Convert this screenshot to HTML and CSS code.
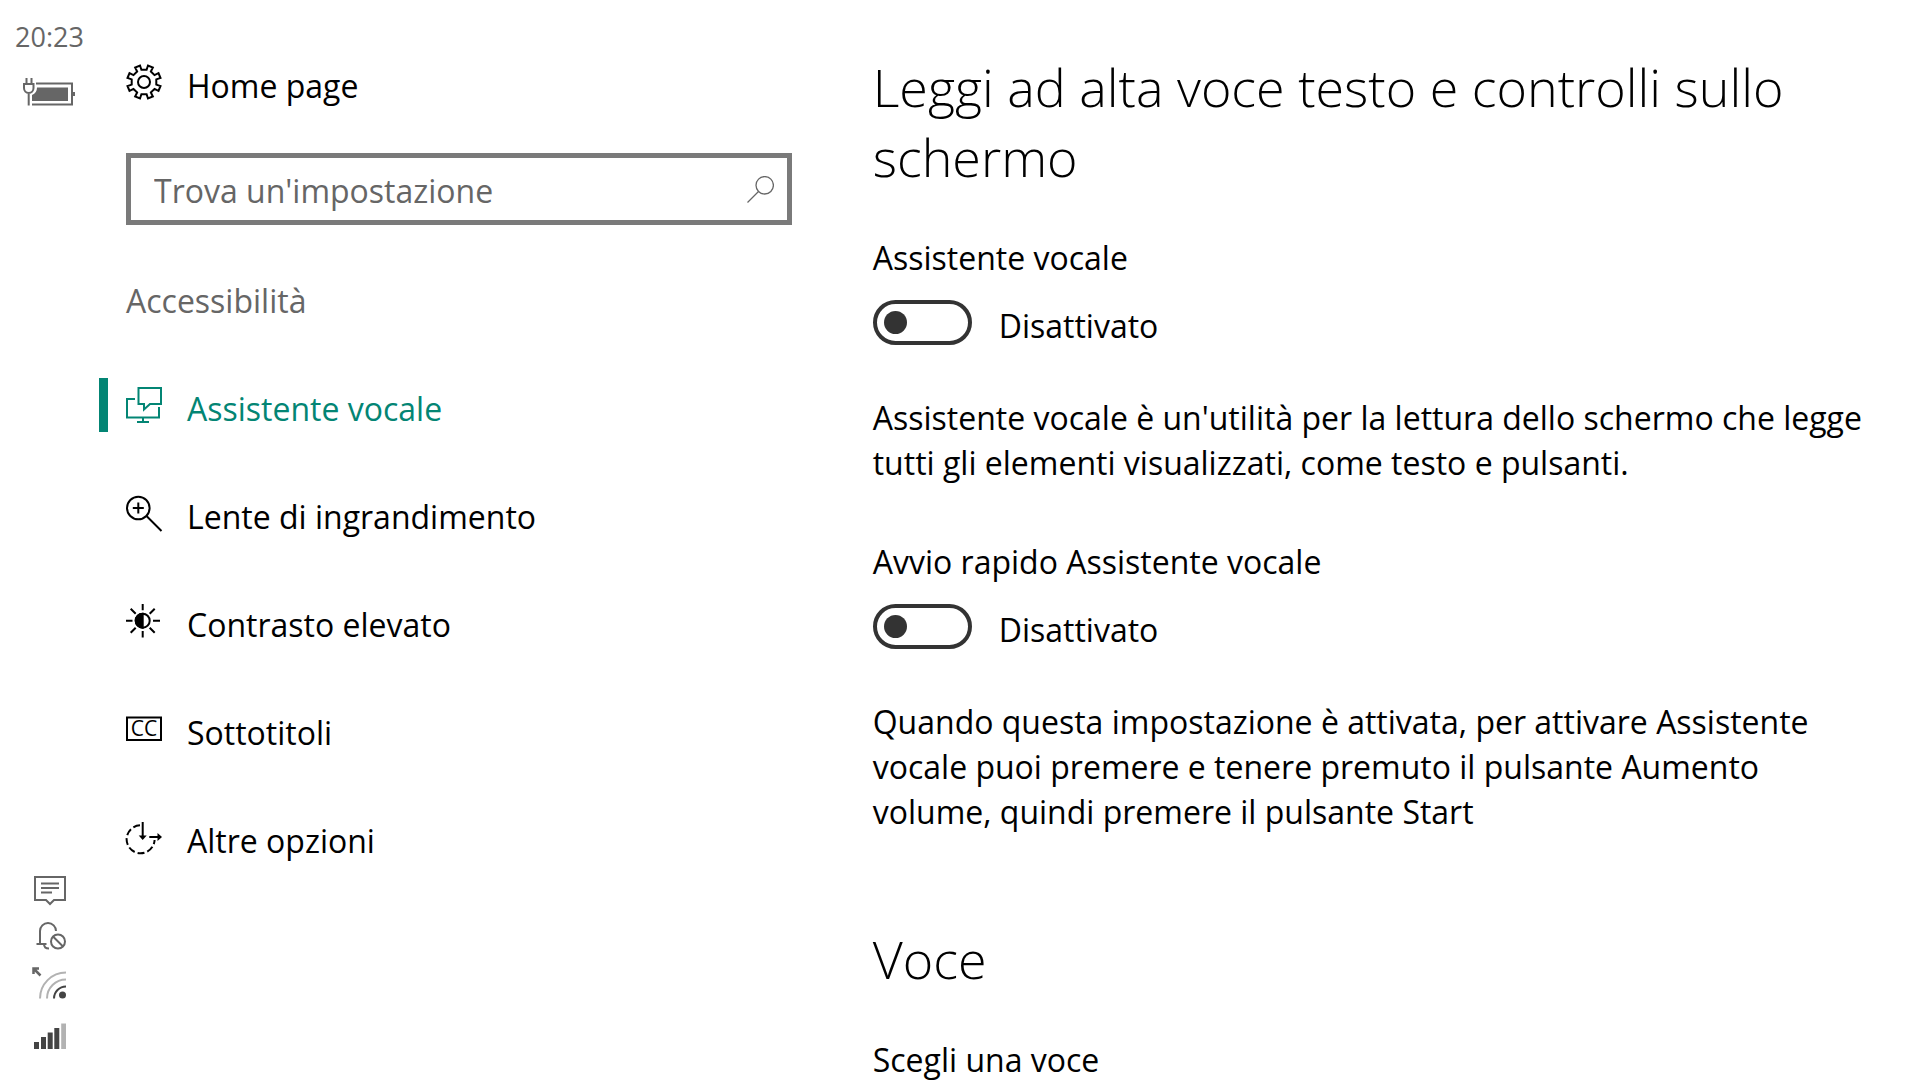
FILE: index.html
```html
<!DOCTYPE html>
<html lang="it">
<head>
    <meta charset="UTF-8">
    <meta name="viewport" content="width=device-width, initial-scale=1.0">
    <title>Assistente vocale</title>
    <link rel="stylesheet" href="styles.css">
</head>
<body>
    <div class="app">
        <aside class="statusbar">
            <div class="status-top">
                <time class="clock">20:23</time>
                <svg class="battery" width="53" height="28" viewBox="0 0 53 28">
                    <path d="M3.500 0v6M8.500 0v6M0 6h11.500M1 6v4a4.700 5 0 0 0 9.500 0V6M5.700 15v12.500" fill="none" stroke="currentColor" stroke-width="2"/>
                    <path d="M13 5.500h36v21H9" fill="none" stroke="currentColor" stroke-width="2"/>
                    <path d="M14 9.500h31V23H9v-6q5-2 5-7.500zM50 14h2v4h-2z" fill="currentColor"/>
                </svg>
            </div>
            <div class="status-bottom">
                <svg width="35" height="34" viewBox="0 0 35 34" fill="none" stroke="currentColor" stroke-width="2">
                    <path d="M3 5H33V28H22l-4 4-4-4H3z"/>
                    <path d="M9 11.500h18M9 16h18M9 20.500h11"/>
                </svg>
                <svg width="35" height="34" viewBox="0 0 35 34" fill="none" stroke="currentColor" stroke-width="2">
                    <path d="M8 25V12a8 8 0 0 1 16 0M4.500 25h10M12 25c0 3 2 4.500 5 4.500"/>
                    <circle cx="26" cy="22.500" r="7"/>
                    <path d="M21 17.500l10 10"/>
                </svg>
                <svg width="35" height="34" viewBox="0 0 35 34" fill="none" stroke-width="2">
                    <path d="M1.500 8V2.500H7M1.500 2.500l7 7" stroke="#666" stroke-width="2.500"/>
                    <path d="M8 32.500A26 26 0 0 1 34 6.500M15 32.500a19 19 0 0 1 19-19" stroke="#b2b2b2"/>
                    <path d="M22 32.500a12 12 0 0 1 12-12" stroke="#444"/>
                    <circle cx="30.500" cy="29" r="3.500" fill="#444"/>
                </svg>
                <svg width="35" height="40" viewBox="0 0 35 40" fill="#444">
                    <path d="M2 29h5v7H2zM9 24h5v12H9zM15.700 19.500h5V36h-5zM22.300 15h5v21h-5z"/>
                    <path d="M29.200 10.500h4.800V36h-4.800z" fill="#b2b2b2"/>
                </svg>
            </div>
        </aside>

        <nav class="sidebar">
            <a class="nav-link" href="#">
                <svg class="icon" viewBox="0 0 36 36">
                    <path transform="translate(18 18)" d="M-4-16.500-2.600-12.300H2.600L4-16.500 8.840-14.500 6.860-10.540 10.540-6.860 14.500-8.840 16.500-4 12.300-2.600V2.600L16.500 4 14.500 8.840 10.540 6.860 6.860 10.540 8.840 14.500 4 16.500 2.600 12.300H-2.600L-4 16.500-8.840 14.500-6.860 10.540-10.540 6.860-14.500 8.840-16.500 4-12.300 2.600V-2.600L-16.500-4-14.500-8.840-10.540-6.860-6.860-10.540-8.840-14.500z"/>
                    <circle cx="18" cy="18" r="6"/>
                </svg>
                <span class="nav-text">Home page</span>
            </a>

            <label class="search">
                <input type="text" placeholder="Trova un'impostazione" aria-label="Trova un'impostazione">
                <svg width="27" height="27" viewBox="0 0 27 27" fill="none" stroke="currentColor" stroke-width="1.300">
                    <circle cx="17.700" cy="9.300" r="8.700"/>
                    <path d="M11.500 15.500L.5 26.500"/>
                </svg>
            </label>

            <h2 class="group-title">Accessibilità</h2>

            <ul class="nav-list">
                <li>
                    <a class="nav-link active" href="#">
                        <svg class="icon" viewBox="0 0 36 36">
                            <path d="M12.500 1H35V17H24l-6 5.500V17H12.500z"/>
                            <path d="M9 12H1V30.500H33V20M17 31v4M11 35h12"/>
                        </svg>
                        <span class="nav-text">Assistente vocale</span>
                    </a>
                </li>
                <li>
                    <a class="nav-link" href="#">
                        <svg class="icon" viewBox="0 0 36 36">
                            <circle cx="12.300" cy="13" r="11.300"/>
                            <path d="M20.500 21L35.500 36M12.300 7.500v11M6.800 13h11"/>
                        </svg>
                        <span class="nav-text">Lente di ingrandimento</span>
                    </a>
                </li>
                <li>
                    <a class="nav-link" href="#">
                        <svg class="icon" viewBox="0 0 36 36">
                            <circle cx="16.700" cy="17.700" r="7"/>
                            <path d="M16.700 10.700a7 7 0 0 0 0 14z" fill="currentColor"/>
                            <path d="M16.700 1v6.300M16.700 28v6.500M0 17.700h6.500M27 17.700h7M4.700 5.700l5 5M28.700 5.700l-5 5M4.700 29.700l5-5M28.700 29.700l-5-5"/>
                        </svg>
                        <span class="nav-text">Contrasto elevato</span>
                    </a>
                </li>
                <li>
                    <a class="nav-link" href="#">
                        <svg class="icon" viewBox="0 0 36 36">
                            <path d="M1 6.500H35V29H1z"/>
                            <text class="cc" x="18" y="25">CC</text>
                        </svg>
                        <span class="nav-text">Sottotitoli</span>
                    </a>
                </li>
                <li>
                    <a class="nav-link" href="#">
                        <svg class="icon" viewBox="0 0 36 36">
                            <path d="M14 6.300A14 14 0 1 0 28.600 21" stroke-dasharray="7 3"/>
                            <path d="M16.700 3v15M23.300 18H33"/>
                            <path d="M12.700 16.500h8l-4 4.500zM31.500 14l4.500 4-4.500 4z" fill="currentColor" stroke="none"/>
                        </svg>
                        <span class="nav-text">Altre opzioni</span>
                    </a>
                </li>
            </ul>
        </nav>

        <main class="content">
            <section>
                <h1 class="title">Leggi ad alta voce testo e controlli sullo schermo</h1>

                <div class="setting">
                    <p id="narratorLabel">Assistente vocale</p>
                    <label class="toggle">
                        <input type="checkbox" role="switch" aria-labelledby="narratorLabel">
                        <span class="toggle-state">Disattivato</span>
                    </label>
                    <p class="description">Assistente vocale è un'utilità per la lettura dello schermo che legge tutti gli elementi visualizzati, come testo e pulsanti.</p>
                </div>

                <div class="setting">
                    <p id="quickLabel">Avvio rapido Assistente vocale</p>
                    <label class="toggle">
                        <input type="checkbox" role="switch" aria-labelledby="quickLabel">
                        <span class="toggle-state">Disattivato</span>
                    </label>
                    <p class="description">Quando questa impostazione è attivata, per attivare Assistente vocale puoi premere e tenere premuto il pulsante Aumento volume, quindi premere il pulsante Start</p>
                </div>
            </section>

            <section>
                <h1 class="title">Voce</h1>
                <p class="field-label">Scegli una voce</p>
            </section>
        </main>
    </div>

    <script>
        // Aggiorna il testo accanto all'interruttore
        document.querySelectorAll(".toggle input").forEach(function (input) {
            input.addEventListener("change", function () {
                input.nextElementSibling.textContent = input.checked ? "Attivato" : "Disattivato";
            });
        });
    </script>
</body>
</html>
```

FILE: styles.css
```css
* {
    box-sizing: border-box;
}
body {
    margin: 0;
    background-color: #ffffff;
    color: #000000;
    font-family: "Open Sans", "Noto Sans", sans-serif;
    font-size: 32px;
    line-height: 45px;
}
h1, h2, p, ul {
    margin: 0;
    padding: 0;
    font-weight: normal;
}
svg {
    display: block;
    flex: none;
}
.app {
    display: grid;
    grid-template-columns: 99px 8fr 13fr;
    height: 100vh;
    overflow: hidden;
}

/* Barra di stato verticale */
.statusbar {
    display: flex;
    flex-direction: column;
    justify-content: space-between;
    padding: 17px 0 27px;
    color: #666666;
}
.status-top, .status-bottom {
    display: flex;
    flex-direction: column;
    align-items: center;
    gap: 13px;
}
.status-top {
    gap: 21px;
}
.clock {
    font-size: 27px;
    line-height: 40px;
}

/* Menu */
.sidebar {
    padding-top: 55px;
}
.nav-link {
    display: flex;
    align-items: center;
    gap: 25px;
    height: 54px;
    padding-left: 18px;
    border-left: 9px solid transparent;
    color: #000000;
    text-decoration: none;
}
.nav-link.active {
    color: #038574;
    border-left-color: #038574;
}
.nav-text {
    padding-top: 6px;
}
.icon {
    width: 36px;
    height: 36px;
    fill: none;
    stroke: currentColor;
    stroke-width: 2;
    overflow: visible;
}
.cc {
    font-size: 21px;
    text-anchor: middle;
    fill: currentColor;
    stroke: none;
}
.search {
    display: flex;
    align-items: center;
    height: 72px;
    margin: 44px 1px 53px 27px;
    padding: 0 13px 0 23px;
    border: 5px solid #7a7a7a;
    color: #666666;
}
.search input {
    flex: 1;
    min-width: 0;
    padding: 2px 0 0;
    border: none;
    outline: none;
    background: none;
    font: inherit;
    color: #000000;
}
.search input::placeholder {
    color: #666666;
    opacity: 1;
}
.group-title {
    margin: 0 0 28px 27px;
    font-size: 32px;
    color: #666666;
}
.nav-list {
    display: flex;
    flex-direction: column;
    gap: 54px;
    padding-top: 27px;
    list-style: none;
}

/* Contenuto */
.content {
    padding: 52px 48px 0 80px;
    overflow-y: auto;
    scrollbar-width: none;
}
.title {
    margin-bottom: 43px;
    font-size: 52px;
    font-weight: 300;
    line-height: 70px;
}
.setting {
    margin-bottom: 54px;
}
.setting:last-child {
    margin-bottom: 90px;
}
.toggle {
    display: flex;
    align-items: center;
    gap: 27px;
    height: 45px;
    margin: 20px 0 50px;
}
.toggle input {
    appearance: none;
    display: flex;
    align-items: center;
    width: 99px;
    height: 45px;
    margin: 0;
    padding: 0 7px;
    border: 4px solid #333333;
    border-radius: 23px;
}
.toggle input::before {
    content: "";
    width: 23px;
    height: 23px;
    border-radius: 50%;
    background-color: #333333;
}
.toggle input:checked {
    justify-content: flex-end;
    background-color: #038574;
    border-color: #038574;
}
.toggle input:checked::before {
    background-color: #ffffff;
}
.toggle-state {
    padding-top: 6px;
}
```
